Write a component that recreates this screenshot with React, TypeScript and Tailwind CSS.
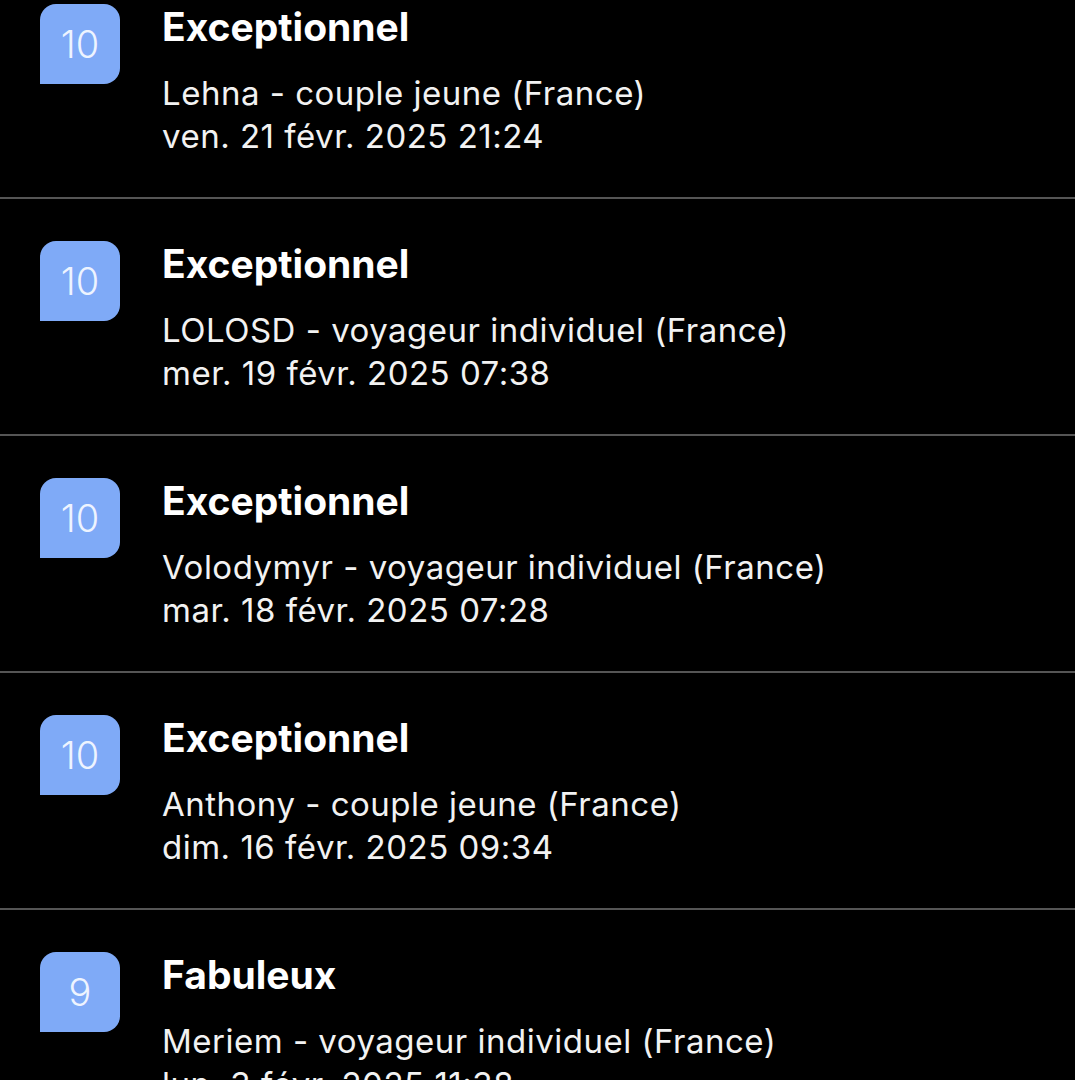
import React from 'react'

type Review = {
  score: number
  label: string
  author: string
  date: string
}

const reviews: Review[] = [
  { score: 10, label: 'Exceptionnel', author: 'Lehna - couple jeune (France)', date: 'ven. 21 févr. 2025 21:24' },
  { score: 10, label: 'Exceptionnel', author: 'LOLOSD - voyageur individuel (France)', date: 'mer. 19 févr. 2025 07:38' },
  { score: 10, label: 'Exceptionnel', author: 'Volodymyr - voyageur individuel (France)', date: 'mar. 18 févr. 2025 07:28' },
  { score: 10, label: 'Exceptionnel', author: 'Anthony - couple jeune (France)', date: 'dim. 16 févr. 2025 09:34' },
  { score: 9, label: 'Fabuleux', author: 'Meriem - voyageur individuel (France)', date: 'lun. 3 févr. 2025 11:38' },
]

function ReviewRow({ review }: { review: Review }) {
  return (
    <div className="flex h-[237px] border-b-2 border-[#555555] pl-[40px] pt-[42px]">
      {/* note */}
      <div className="flex h-[80px] w-[80px] shrink-0 items-center justify-center rounded-tl-[16px] rounded-tr-[16px] rounded-br-[16px] bg-[#7faaf7]">
        <span className="text-[38px] font-light leading-none text-[#eef4ff]">{review.score}</span>
      </div>
      <div className="ml-[42px] flex flex-col">
        <div className="mt-[1px] text-[39px] font-bold leading-[44px] text-white">{review.label}</div>
        <div className="mt-[23px] text-[33px] leading-[43px] tracking-[0.5px] text-[#f2f2f2]">
          <div>{review.author}</div>
          <div>{review.date}</div>
        </div>
      </div>
    </div>
  )
}

export default function App() {
  return (
    <div
      className="h-[1080px] w-full overflow-hidden bg-black"
      style={{ fontFamily: 'Inter, "Noto Sans", sans-serif' }}
    >
      <div className="mt-[-38px]">
        {reviews.map((r, i) => (
          <ReviewRow key={i} review={r} />
        ))}
      </div>
    </div>
  )
}
